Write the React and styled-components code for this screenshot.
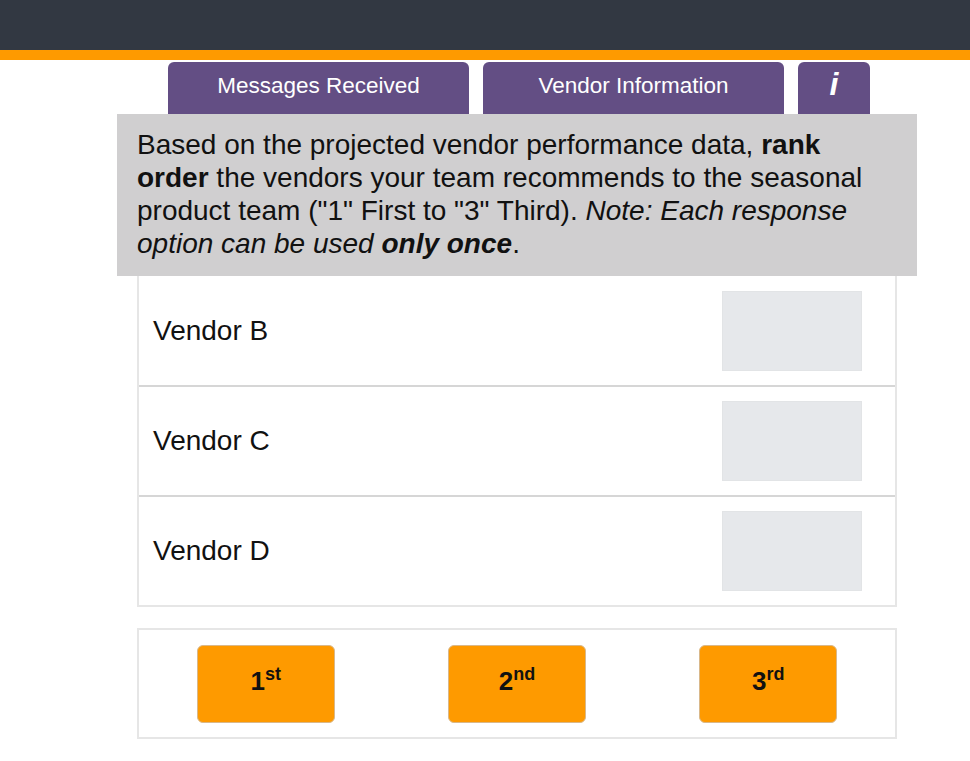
import React from "react";
import styled, { createGlobalStyle } from "styled-components";

const GlobalStyle = createGlobalStyle`
  body {
    margin: 0;
    background: #fff;
    font-family: Arial, "Liberation Sans", sans-serif;
  }
`;

const Header = styled.div`
  height: 50px;
  background: #323842;
  border-bottom: 10px solid #fe9a00;
`;

const Main = styled.div`
  width: 800px;
  margin-left: 117px;
`;

const Tabs = styled.div`
  display: flex;
  gap: 14px;
  padding: 2px 0 0 51px;
`;

const Tab = styled.div`
  width: ${(p) => p.width}px;
  height: 52px;
  box-sizing: border-box;
  background: #634e84;
  color: #fff;
  border-radius: 6px 6px 0 0;
  display: flex;
  justify-content: center;
  padding-top: ${(p) => (p.icon ? "10px" : "12px")};
  font-size: ${(p) => (p.icon ? "32px" : "22.5px")};
  font-style: ${(p) => (p.icon ? "italic" : "normal")};
  font-weight: ${(p) => (p.icon ? "bold" : "normal")};
  line-height: 24px;
`;

const Prompt = styled.div`
  background: #d0cfd0;
  padding: 14px 20px 16px;
  font-size: 28px;
  line-height: 33px;
  color: #111;
`;

const Body = styled.div`
  margin: 0 20px;
`;

const List = styled.div`
  border: 2px solid #e6e6e6;
  border-top: none;
`;

const Row = styled.div`
  height: ${(p) => (p.first ? 109 : 108)}px;
  display: flex;
  align-items: center;
  justify-content: space-between;
  padding: 0 33px 0 14px;
  border-top: ${(p) => (p.first ? "none" : "2px solid #d6d6d6")};
  font-size: 28px;
  color: #111;
`;

const Drop = styled.div`
  width: 138px;
  height: 78px;
  background: #e6e8eb;
  border: 1px solid #e2e4e6;
`;

const Choices = styled.div`
  margin-top: 21px;
  height: 107px;
  border: 2px solid #e6e6e6;
  display: grid;
  grid-template-columns: repeat(3, 1fr);
  align-items: center;
  justify-items: center;
  padding: 0 1px;
`;

const Choice = styled.button`
  width: 138px;
  height: 78px;
  background: #fe9a00;
  border: 1px solid #d9b88a;
  border-radius: 6px;
  font-family: Arial, "Liberation Sans", sans-serif;
  font-size: 26px;
  font-weight: bold;
  color: #111;
  padding: 0 0 4px;
  cursor: pointer;

  sup {
    font-size: 18px;
    vertical-align: 10px;
    line-height: 0;
  }
`;

const vendors = ["Vendor B", "Vendor C", "Vendor D"];
const ranks = [
  ["1", "st"],
  ["2", "nd"],
  ["3", "rd"],
];

export default function App() {
  return (
    <>
      <GlobalStyle />
      <Header />
      <Main>
        <Tabs>
          <Tab width={301}>Messages Received</Tab>
          <Tab width={301}>Vendor Information</Tab>
          <Tab width={72} icon>
            i
          </Tab>
        </Tabs>
        <Prompt>
          Based on the projected vendor performance data, <b>rank order</b>{" "}
          the vendors your team recommends to the seasonal product team ("1"
          First to "3" Third).{" "}
          <i>
            Note: Each response option can be used <b>only once</b>
          </i>
          .
        </Prompt>
        <Body>
          <List>
            {vendors.map((v, i) => (
              <Row key={v} first={i === 0}>
                {v}
                <Drop />
              </Row>
            ))}
          </List>
          <Choices>
            {ranks.map(([n, s]) => (
              <Choice key={n}>
                {n}
                <sup>{s}</sup>
              </Choice>
            ))}
          </Choices>
        </Body>
      </Main>
    </>
  );
}
